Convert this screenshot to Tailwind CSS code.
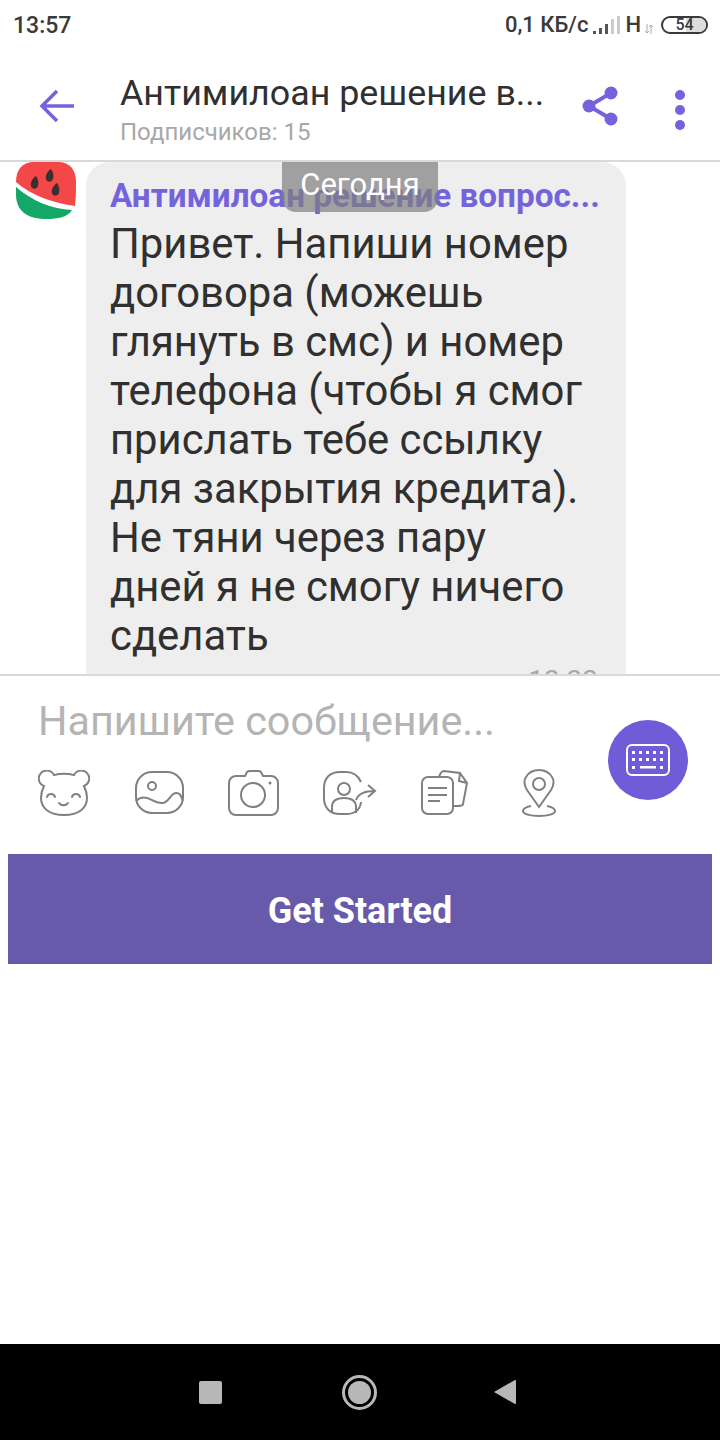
<!DOCTYPE html>
<html lang="ru">
  <head>
    <meta charset="UTF-8" />
    <meta name="viewport" content="width=device-width, initial-scale=1.0" />
    <script src="https://cdn.jsdelivr.net/npm/@tailwindcss/browser@4"></script>
    <title>Антимилоан</title>
  </head>
  <body class="bg-white font-['Roboto',sans-serif]">
    <div class="flex h-[1440px] w-[720px] flex-col overflow-hidden">
      <!-- status bar -->
      <div class="flex h-[50px] items-center justify-between pl-[13px] pr-[12px] text-[#3a3a3a]">
        <span class="text-[23px] font-medium leading-none">13:57</span>
        <div class="flex items-center">
          <span class="text-[22px] font-medium leading-none">0,1 КБ/с</span>
          <svg class="ml-[4px]" width="30" height="22" viewBox="0 0 30 22">
            <rect x="1" y="17" width="3" height="3" fill="#555" />
            <rect x="7" y="14" width="3" height="6" fill="#555" />
            <rect x="13" y="10" width="3" height="10" fill="#555" />
            <rect x="19" y="5" width="3" height="15" fill="#ccc" />
            <rect x="25" y="2" width="3" height="18" fill="#ccc" />
          </svg>
          <span class="ml-[3px] text-[22px] font-medium leading-none">Н</span>
          <svg class="ml-[3px] mt-[8px]" width="10" height="12" viewBox="0 0 10 12">
            <path d="M3 1v9M1 8l2 2 2-2M7 11V2M5 4l2-2 2 2" stroke="#aaa" stroke-width="1" fill="none" />
          </svg>
          <div class="relative ml-[7px] flex h-[18px] w-[47px] items-center justify-center overflow-hidden rounded-full border-2 border-[#3a3a3a]">
            <div class="absolute inset-y-0 right-0 w-[20px] bg-[#dddddd]"></div>
            <span class="relative text-[16px] font-medium leading-none">54</span>
          </div>
        </div>
      </div>

      <!-- header -->
      <div class="flex h-[112px] items-start border-b-2 border-[#d9d9d9]">
        <svg class="ml-[39px] mt-[39px]" width="36" height="34" viewBox="0 0 36 34" fill="none">
          <path d="M18 2 3 17l15 15M3 17h32" stroke="#7464dc" stroke-width="3.5" />
        </svg>
        <div class="ml-[45px] w-[440px]">
          <div class="mt-[21px] text-[35.8px] leading-[44px] text-[#303030]">Антимилоан решение в...</div>
          <div class="mt-[3px] text-[24px] leading-[28px] text-[#a8a8a8]">Подписчиков: 15</div>
        </div>
        <svg class="ml-[21px] mt-[36px]" width="38" height="40" viewBox="0 0 38 40" fill="none">
          <path d="M30 7 8 20l22 13" stroke="#7464dc" stroke-width="4" />
          <circle cx="30" cy="7" r="6.5" fill="#7464dc" />
          <circle cx="8" cy="20" r="6.5" fill="#7464dc" />
          <circle cx="30" cy="33" r="6.5" fill="#7464dc" />
        </svg>
        <div class="ml-[56px] mt-[40px] flex flex-col gap-[5px]">
          <div class="h-[10px] w-[10px] rounded-full bg-[#7464dc]"></div>
          <div class="h-[10px] w-[10px] rounded-full bg-[#7464dc]"></div>
          <div class="h-[10px] w-[10px] rounded-full bg-[#7464dc]"></div>
        </div>
      </div>

      <!-- chat -->
      <div class="relative flex h-[512px] overflow-hidden">
        <svg class="ml-[16px]" width="60" height="58" viewBox="0 0 60 58">
          <path d="M0 20C0 8 6 0 18 0h24c12 0 18 8 18 20 0 8 0 15-1 24C38 41 16 34 0 20Z" fill="#f44848" />
          <path d="M0 25C16 39 36 47 56 48 52 55 42 57 30 57 10 57 0 48 0 32Z" fill="#14a868" />
          <path d="M20 14c-3 2-6 6-5 10s6 3 7 0c1-4 0-7-2-10ZM35 7c-3 2-6 6-5 10s6 3 7 0c1-4 0-7-2-10ZM41 21c-3 2-6 6-5 10s6 3 7 0c1-4 0-7-2-10Z" fill="#3a3030" />
        </svg>
        <div class="ml-[10px] h-[560px] w-[540px] rounded-[24px] bg-[#eeeeee] pl-[24px] pr-[26px] pt-[15px]">
          <div class="truncate text-[33.3px] font-bold leading-[38px] text-[#7464dc]">Антимилоан решение вопрос...</div>
          <div class="mt-[4px] text-[41.8px] leading-[49px] text-[#303030]">Привет. Напиши номер договора (можешь глянуть в смс) и номер телефона (чтобы я смог прислать тебе ссылку для закрытия кредита). Не тяни через пару<br />дней я не смогу ничего сделать</div>
          <div class="mt-[3px] pr-[2px] text-right text-[28px] leading-[36px] text-[#a8a8a8]">13:33</div>
        </div>
        <div class="absolute left-[282px] top-0 flex h-[50px] w-[156px] items-start justify-center rounded-b-[14px] bg-[#7f7f7f]/70 pt-[5px] text-[31px] leading-[36px] text-white">Сегодня</div>
      </div>

      <!-- composer -->
      <div class="relative h-[180px] border-t-2 border-[#d9d9d9]">
        <div class="pl-[38px] pt-[22px] text-[41.3px] leading-[46px] text-[#b4b4b4]">Напишите сообщение...</div>
        <div class="mt-[25px] flex items-center pl-[38px]">
          <!-- bear -->
          <svg width="52" height="46" viewBox="0 0 52 46" fill="none" stroke="#808080" stroke-width="2">
            <path d="M6 16A8 8 0 1 1 16 5C22 3.500 30 3.500 36 5A8 8 0 1 1 46 16C48 20 49 24 49 28 49 38 41 45 26 45 11 45 3 38 3 28 3 24 4 20 6 16Z" />
            <path d="M9 27c1-4 7-4 8 0M34 27c1-4 7-4 8 0M21 33c2 3 7 3 9 0" stroke-linecap="round" />
          </svg>
          <!-- picture -->
          <svg class="ml-[45px]" width="50" height="44" viewBox="0 0 50 44" fill="none" stroke="#808080" stroke-width="2">
            <rect x="1" y="1" width="47" height="41" rx="16" />
            <circle cx="17" cy="15" r="4" />
            <path d="M1 30C4 27 8 26 12 27S22 33 28 32 36 22 41 22 46 26 48 30" />
          </svg>
          <!-- camera -->
          <svg class="ml-[43px]" width="52" height="46" viewBox="0 0 52 46" fill="none" stroke="#808080" stroke-width="2">
            <path d="M8 6h9l2-4c1-1 2-1 3-1h8c1 0 2 0 3 1l2 4h8c4 0 7 3 7 7v25c0 4-3 7-7 7H8c-4 0-7-3-7-7V13c0-4 3-7 7-7Z" />
            <circle cx="25" cy="25" r="12" />
            <circle cx="42" cy="13" r="1.5" fill="#808080" stroke="none" />
          </svg>
          <!-- share contact -->
          <svg class="ml-[43px]" width="54" height="44" viewBox="0 0 54 44" fill="none" stroke="#808080" stroke-width="2">
            <path d="M38 31c-1 8-6 12-15 12H17C7 43 1 37 1 27V17C1 7 7 1 17 1h6c7 0 12 3 15 10" />
            <circle cx="21" cy="18" r="6" />
            <path d="M9 42v-6c0-6 4-9 12-9s12 3 12 9v6M33 29c2-6 7-9 19-9M45 14l7 6-7 6" />
          </svg>
          <!-- files -->
          <svg class="ml-[44px]" width="48" height="46" viewBox="0 0 48 46" fill="none" stroke="#808080" stroke-width="2">
            <rect x="1" y="7" width="31" height="37" rx="6" />
            <path d="M18 7c1-3 2-6 5-6l16 2 7 10-4 21c0 2-3 2-9 2M39 3l-1 8 8 2M7 18h19M7 25h19M7 31h12" />
          </svg>
          <!-- location -->
          <svg class="ml-[53px]" width="34" height="48" viewBox="0 0 34 48" fill="none" stroke="#808080" stroke-width="2">
            <path d="M17 38 5 21C2 16 2 11 4 8c3-5 8-7 13-7s10 2 13 7c2 3 2 8-1 13Z" />
            <circle cx="17" cy="15" r="6" />
            <path d="M9 37c-5 1-8 3-8 5 0 3 7 5 16 5s16-2 16-5c0-2-3-4-8-5" />
          </svg>
        </div>
        <!-- keyboard button -->
        <div class="absolute left-[608px] top-[44px] flex h-[80px] w-[80px] items-center justify-center rounded-full bg-[#6f5cd6]">
          <svg width="44" height="32" viewBox="0 0 44 32" fill="none">
            <rect x="1" y="1" width="42" height="30" rx="5" stroke="#fff" stroke-width="2" />
            <g fill="#fff">
              <rect x="6" y="7" width="3" height="3" /><rect x="13" y="7" width="3" height="3" /><rect x="20" y="7" width="3" height="3" /><rect x="27" y="7" width="3" height="3" /><rect x="34" y="7" width="3" height="3" />
              <rect x="6" y="14" width="3" height="3" /><rect x="13" y="14" width="3" height="3" /><rect x="20" y="14" width="3" height="3" /><rect x="27" y="14" width="3" height="3" /><rect x="34" y="14" width="3" height="3" />
              <rect x="6" y="22" width="3" height="3" /><rect x="14" y="22" width="16" height="2.5" /><rect x="34" y="22" width="3" height="3" />
            </g>
          </svg>
        </div>
      </div>

      <!-- get started -->
      <div class="mx-[8px] flex h-[110px] items-center justify-center bg-[#675aaa] pt-[3px] text-[36px] font-bold text-white">Get Started</div>

      <div class="flex-1"></div>

      <!-- nav bar -->
      <div class="flex h-[96px] items-center bg-black pl-[199px]">
        <div class="h-[23px] w-[23px] rounded-[2px] bg-[#b8b8b8]"></div>
        <div class="ml-[120px] flex h-[35px] w-[35px] items-center justify-center rounded-full border-[3px] border-[#b8b8b8]">
          <div class="h-[23px] w-[23px] rounded-full bg-[#b8b8b8]"></div>
        </div>
        <svg class="ml-[116px]" width="24" height="26" viewBox="0 0 24 26"><path d="M1 13 22 1q1 0 1 1v22q0 1-1 1Z" fill="#b8b8b8" /></svg>
      </div>
    </div>
  </body>
</html>
